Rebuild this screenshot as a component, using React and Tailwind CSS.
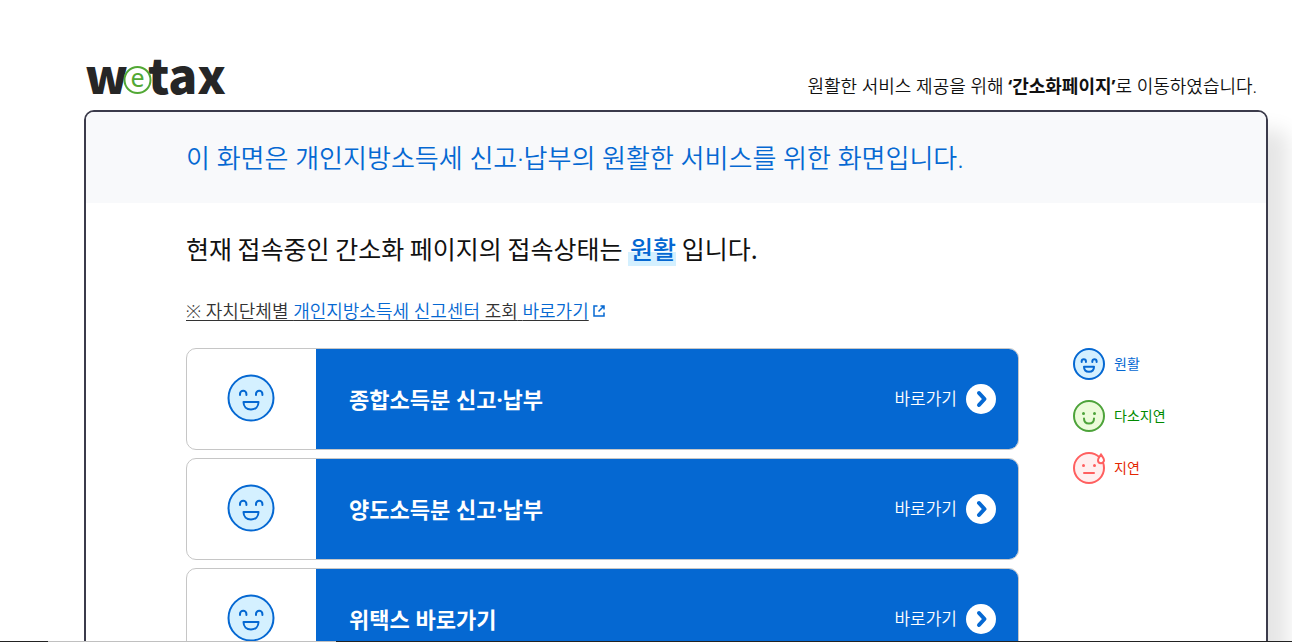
const services = [
  { id: 1, title: "종합소득분 신고·납부" },
  { id: 2, title: "양도소득분 신고·납부" },
  { id: 3, title: "위택스 바로가기" },
];

function Logo() {
  return (
    <svg className="overflow-visible" width="150" height="44" viewBox="0 0 150 44" role="img" aria-label="wetax">
      <g fill="#262626" fontFamily="'Noto Sans CJK KR', 'Noto Sans', sans-serif" fontWeight="900" fontSize="48">
        <text x="1" y="40">w</text>
        <text x="64" y="40">tax</text>
      </g>
      <circle cx="53.500" cy="26" r="13" fill="#fff" stroke="#52a835" strokeWidth="2" />
      <text x="53.500" y="33" fill="#52a835" fontFamily="'Noto Sans', sans-serif" fontSize="25" textAnchor="middle">
        e
      </text>
    </svg>
  );
}

function GoodFace({ className, stroke = 2 }) {
  return (
    <svg className={className} viewBox="0 0 48 48" fill="none" stroke="#0568d2" strokeWidth={stroke} strokeLinecap="round" strokeLinejoin="round">
      <circle cx="24" cy="24" r="22.500" fill="#d4f0ff" />
      <path d="M13 21v-1a3.200 3.200 0 0 1 6.400 0v1M29 21v-1a3.200 3.200 0 0 1 6.400 0v1" />
      <path d="M16.500 28h15c0 4.500-3 7.500-7.500 7.500s-7.500-3-7.500-7.500z" />
    </svg>
  );
}

function SlowFace() {
  return (
    <svg className="size-8" viewBox="0 0 32 32" fill="none" stroke="#4da33a" strokeWidth="2" strokeLinecap="round">
      <circle cx="16" cy="16" r="15" fill="#ecfbda" />
      <circle cx="10.500" cy="13.500" r="1.500" fill="#4da33a" stroke="none" />
      <circle cx="21.500" cy="13.500" r="1.500" fill="#4da33a" stroke="none" />
      <path d="M11 18.500c0 3 2 5 5 5s5-2 5-5" />
    </svg>
  );
}

function DelayFace() {
  return (
    <svg className="size-8 overflow-visible" viewBox="0 0 32 32" fill="none" stroke="#ff5f5f" strokeWidth="2" strokeLinecap="round">
      <circle cx="16" cy="16" r="15" fill="#ffefef" />
      <circle cx="10.500" cy="13.500" r="1.500" fill="#ff5f5f" stroke="none" />
      <circle cx="21.500" cy="13.500" r="1.500" fill="#ff5f5f" stroke="none" />
      <path d="M11 21h10" />
      <path d="M28 2.500c1.800 2.500 3 4 3 5.700a3 3 0 0 1-6 0c0-1.700 1.200-3.200 3-5.700z" fill="#fff" />
    </svg>
  );
}

function ServiceRow({ title }) {
  return (
    <li className="flex h-[102px] overflow-hidden rounded-[10px] border border-[#c6c6c6] bg-white">
      <div className="flex w-[129px] shrink-0 items-center justify-center pr-0.5 pb-0.5">
        <GoodFace className="size-12" />
      </div>
      <a href="#" className="flex flex-1 items-center justify-between bg-[#0568d2] pr-[22px] pl-[33px] text-white">
        <strong className="text-[22px] font-bold">{title}</strong>
        <span className="flex items-center gap-[9px] text-[17px] font-[350]">
          바로가기
          <svg className="size-[30px]" viewBox="0 0 30 30" fill="none">
            <circle cx="15" cy="15" r="15" fill="#fff" />
            <path d="M13 9l5.500 6-5.500 6" stroke="#0568d2" strokeWidth="4" strokeLinecap="round" strokeLinejoin="round" />
          </svg>
        </span>
      </a>
    </li>
  );
}

export default function App() {
  return (
    <div className="flex h-screen flex-col overflow-hidden bg-white pr-6 pl-[84px] font-['Noto_Sans','Noto_Sans_CJK_KR',sans-serif] text-[#111]">
      {/* HEADER */}
      <header className="flex h-[110px] shrink-0 items-end justify-between pr-[11px] pb-3">
        <h1>
          <Logo />
        </h1>
        <p className="text-lg leading-6 font-[350]">
          원활한 서비스 제공을 위해 <strong className="font-bold">‘간소화페이지’</strong>로 이동하였습니다.
        </p>
      </header>

      {/* MAIN BOX */}
      <main className="shrink-0 rounded-[10px] border-2 border-[#3b3b4b] bg-white pb-20 shadow-[20px_20px_20px_rgba(0,0,0,0.1)]">
        <div className="flex h-[91px] items-center rounded-t-lg bg-[#f8f9fb] px-[100px] pt-0.5">
          <p className="text-[26px] font-[350] text-[#0568d2]">
            이 화면은 개인지방소득세 신고·납부의 원활한 서비스를 위한 화면입니다.
          </p>
        </div>

        <div className="px-[100px] pt-7">
          <h2 className="font-['Noto_Sans_CJK_KR','Noto_Sans',sans-serif] text-[25px] leading-[34px] font-normal">
            현재 접속중인 간소화 페이지의 접속상태는{" "}
            <em className="bg-linear-to-b from-transparent from-60% to-[#d4f0ff] to-60% pl-[2px] font-medium text-[#0568d2] not-italic">원활</em>{" "}
            입니다.
          </h2>

          <a href="#" className="mt-[30px] inline-flex items-center gap-1 text-lg leading-8 font-[350] text-[#333]">
            <span className="underline underline-offset-2">
              ※ 자치단체별 <span className="text-[#0568d2]">개인지방소득세 신고센터</span> 조회{" "}
              <span className="text-[#0568d2]">바로가기</span>
            </span>
            <svg className="size-3" viewBox="0 0 12 12" fill="none" stroke="#0568d2" strokeWidth="1.500">
              <path d="M4.500 1H1v10h10V7.500M7.500 1H11v3.500M11 1L5.500 6.500" />
            </svg>
          </a>

          <div className="mt-[21px] flex gap-[54px]">
            <ul className="flex flex-1 flex-col gap-2">
              {services.map((item) => (
                <ServiceRow key={item.id} title={item.title} />
              ))}
            </ul>

            {/* LEGEND */}
            <ul className="flex w-[93px] shrink-0 flex-col gap-5 text-sm whitespace-nowrap">
              <li className="flex items-center gap-[9px] text-[#0568d2]">
                <GoodFace className="size-8" stroke={3} />
                원활
              </li>
              <li className="flex items-center gap-[9px] text-[#008a00]">
                <SlowFace />
                다소지연
              </li>
              <li className="flex items-center gap-[9px] text-[#e52600]">
                <DelayFace />
                지연
              </li>
            </ul>
          </div>
        </div>
      </main>

      {/* bottom edge line */}
      <div className="fixed inset-x-0 bottom-0 flex h-px bg-[#222]">
        <div className="ml-12 w-72 bg-[#c0c0c0]" />
      </div>
    </div>
  );
}
